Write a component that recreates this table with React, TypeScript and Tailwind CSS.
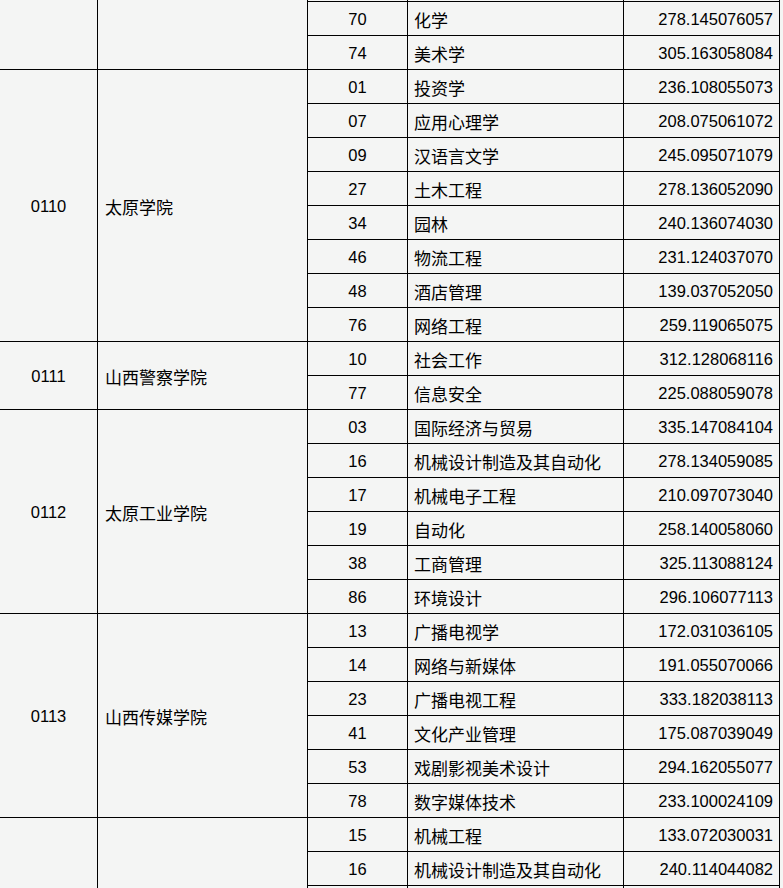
type Row = [string, string, string];

type Group = { code: string; name: string; rows: Row[] };

// first and last rows sit outside the window, only their borders show
const groups: Group[] = [
  {
    code: "",
    name: "",
    rows: [
      ["", "", ""],
      ["70", "化学", "278.145076057"],
      ["74", "美术学", "305.163058084"],
    ],
  },
  {
    code: "0110",
    name: "太原学院",
    rows: [
      ["01", "投资学", "236.108055073"],
      ["07", "应用心理学", "208.075061072"],
      ["09", "汉语言文学", "245.095071079"],
      ["27", "土木工程", "278.136052090"],
      ["34", "园林", "240.136074030"],
      ["46", "物流工程", "231.124037070"],
      ["48", "酒店管理", "139.037052050"],
      ["76", "网络工程", "259.119065075"],
    ],
  },
  {
    code: "0111",
    name: "山西警察学院",
    rows: [
      ["10", "社会工作", "312.128068116"],
      ["77", "信息安全", "225.088059078"],
    ],
  },
  {
    code: "0112",
    name: "太原工业学院",
    rows: [
      ["03", "国际经济与贸易", "335.147084104"],
      ["16", "机械设计制造及其自动化", "278.134059085"],
      ["17", "机械电子工程", "210.097073040"],
      ["19", "自动化", "258.140058060"],
      ["38", "工商管理", "325.113088124"],
      ["86", "环境设计", "296.106077113"],
    ],
  },
  {
    code: "0113",
    name: "山西传媒学院",
    rows: [
      ["13", "广播电视学", "172.031036105"],
      ["14", "网络与新媒体", "191.055070066"],
      ["23", "广播电视工程", "333.182038113"],
      ["41", "文化产业管理", "175.087039049"],
      ["53", "戏剧影视美术设计", "294.162055077"],
      ["78", "数字媒体技术", "233.100024109"],
    ],
  },
  {
    code: "",
    name: "",
    rows: [
      ["15", "机械工程", "133.072030031"],
      ["16", "机械设计制造及其自动化", "240.114044082"],
      ["", "", ""],
    ],
  },
];

const cell = "bg-[#f4f5f4] flex items-center pt-[2px] text-black";
const num = "text-[16.5px] font-['Liberation_Sans','Noto_Sans_CJK_SC',sans-serif]";
const cjk = "text-[17px] font-['Noto_Sans_CJK_SC','Liberation_Sans',sans-serif]";

export default function App() {
  return (
    <div className="h-[888px] w-[783px] overflow-hidden bg-[#f4f5f4]">
      <div className="mt-[-33px] ml-[-1px] grid w-max grid-cols-[97px_209px_99px_215px_155px] auto-rows-[33px] gap-px bg-black p-px">
        {groups.map((g, gi) =>
          g.rows.map((r, ri) => (
            <div key={`${gi}-${ri}`} className="contents">
              {ri === 0 && (
                <>
                  <div
                    className={`${cell} ${num} justify-center`}
                    style={{ gridRow: `span ${g.rows.length}` }}
                  >
                    {g.code}
                  </div>
                  <div
                    className={`${cell} ${cjk} pl-[7px]`}
                    style={{ gridRow: `span ${g.rows.length}` }}
                  >
                    {g.name}
                  </div>
                </>
              )}
              <div className={`${cell} ${num} justify-center`}>{r[0]}</div>
              <div className={`${cell} ${cjk} pl-[6px]`}>{r[1]}</div>
              <div className={`${cell} ${num} justify-end pr-[6px]`}>{r[2]}</div>
            </div>
          ))
        )}
      </div>
    </div>
  );
}
